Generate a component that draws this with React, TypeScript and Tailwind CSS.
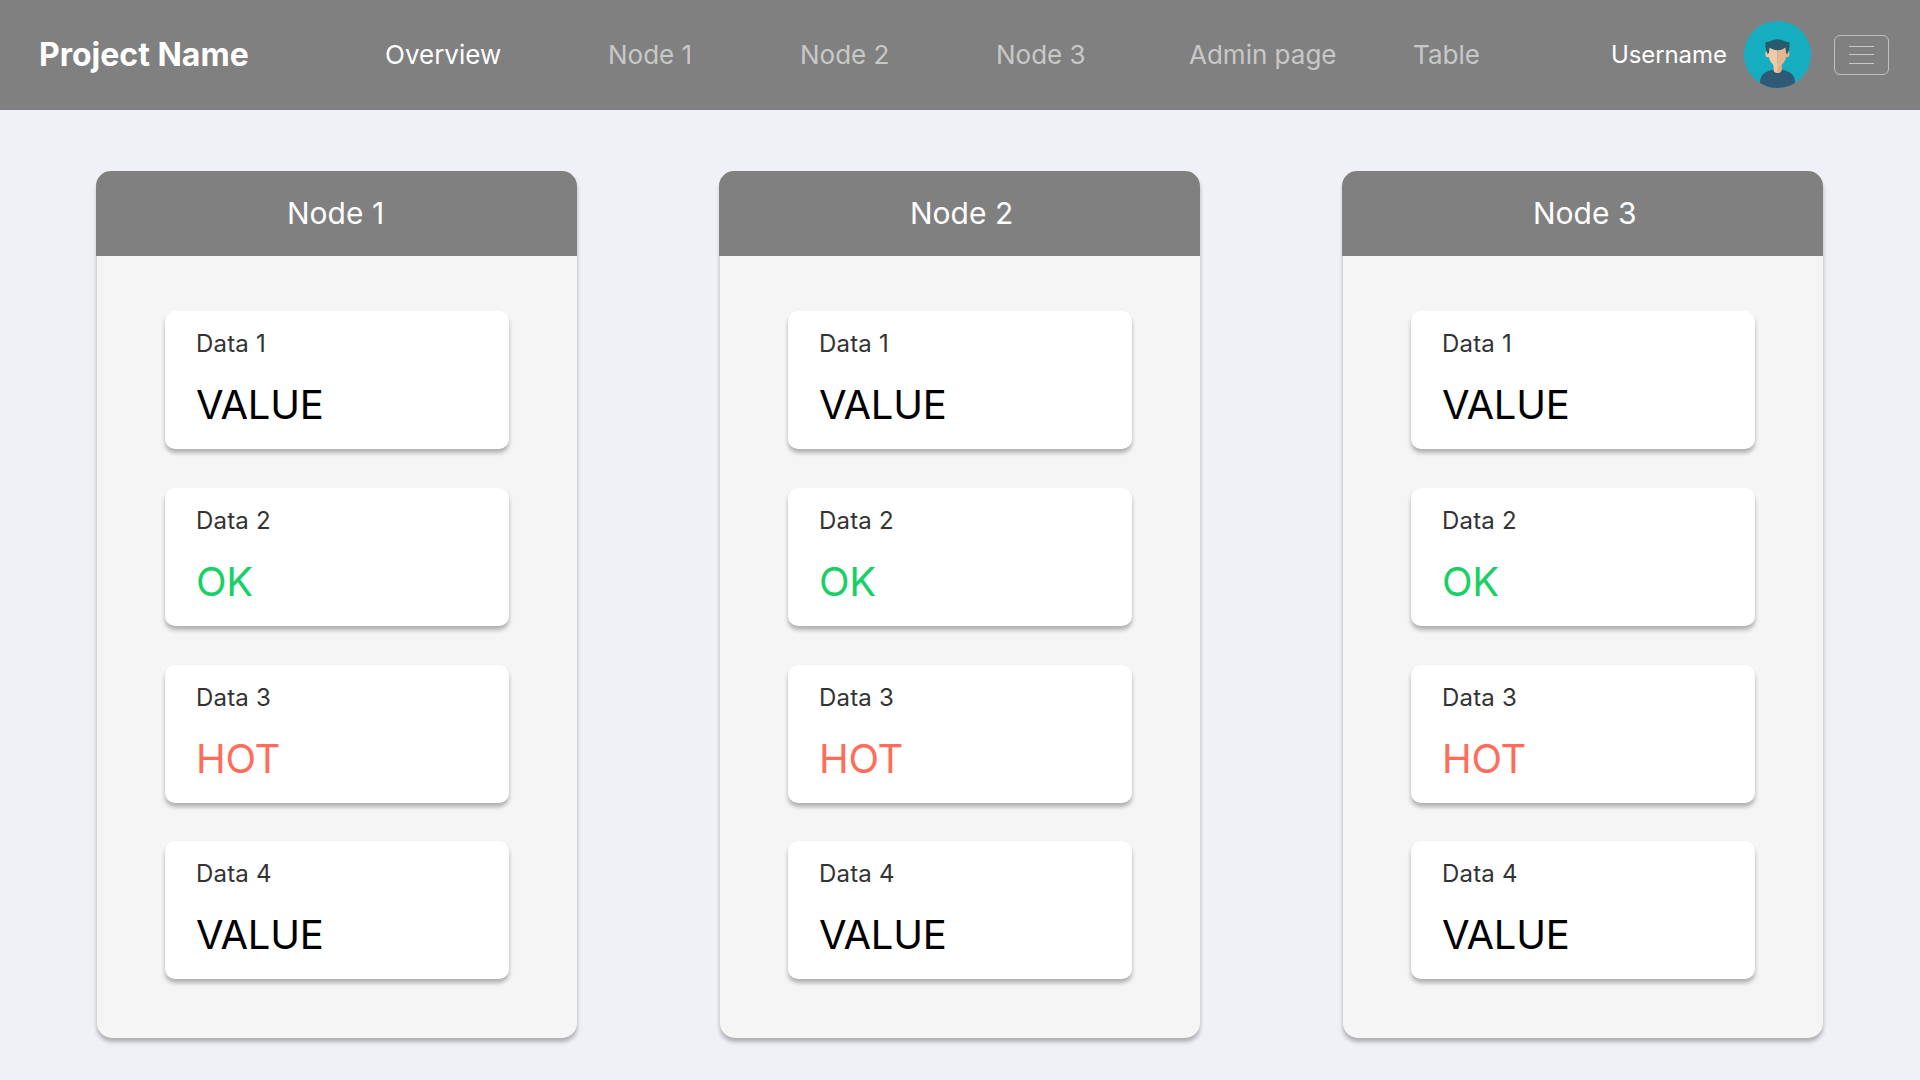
const navItems = [
  { label: "Overview", place: "ml-[137px] w-[223px] text-white" },
  { label: "Node 1", place: "w-[192px] text-[#c8c8c8]" },
  { label: "Node 2", place: "w-[196px] text-[#c8c8c8]" },
  { label: "Node 3", place: "w-[193px] text-[#c8c8c8]" },
  { label: "Admin page", place: "w-[224px] text-[#c8c8c8]" },
  { label: "Table", place: "w-[198px] text-[#c8c8c8]" },
];

const readings = [
  { label: "Data 1", value: "VALUE", tone: "text-black", gap: "mt-[55px]" },
  { label: "Data 2", value: "OK", tone: "text-[#18d065]", gap: "mt-[39px]" },
  { label: "Data 3", value: "HOT", tone: "text-[#ff6d5a]", gap: "mt-[39px]" },
  { label: "Data 4", value: "VALUE", tone: "text-black", gap: "mt-[38px]" },
];

function Avatar() {
  return (
    <svg className="mb-px ml-[17px] size-[67px] shrink-0" viewBox="0 0 67 67">
      <defs>
        <clipPath id="avatar">
          <circle cx="33.5" cy="33.5" r="33.5" />
        </clipPath>
      </defs>
      <g clipPath="url(#avatar)">
        <rect width="67" height="67" fill="#15aec1" />
        <path d="M16 67V61C16.500 53 21 50.500 29.500 48.500H37.500C46 50.500 50.500 53 51 61L52 67Z" fill="#2e5a75" />
        <path d="M29.500 42H37.500V49Q37 52 33.500 52Q30 52 29.500 49Z" fill="#efc4a0" />
        <path d="M33.500 42H37.500V49Q37 52 33.500 52Z" fill="#dfae8a" />
        <ellipse cx="23.700" cy="32.800" rx="2.300" ry="3.500" fill="#efc4a0" />
        <ellipse cx="43.300" cy="32.800" rx="2.300" ry="3.500" fill="#dfae8a" />
        <path d="M24.500 25H33.500V46C27.500 44.500 24.500 38 24.500 33Z" fill="#f3caa7" />
        <path d="M42.500 25H33.500V46C39.500 44.500 42.500 38 42.500 33Z" fill="#e6b691" />
        <path d="M21.500 21C26 21.500 28 18.500 33.500 18.300C39 18.500 41 21.500 45.500 21C46 26 45 29.500 43.500 33L42 32L41.500 26.500C37 30 30 30 25.500 26.500L25 32L23.500 33C22 29.500 21 26 21.500 21Z" fill="#275b6b" />
      </g>
    </svg>
  );
}

function NodeCard({ title }: { title: string }) {
  return (
    <section className="flex h-[867px] w-[481px] flex-col">
      <div className="flex h-full flex-col">
        <h2 className="z-10 flex h-[85px] shrink-0 items-center rounded-t-[15px] bg-[#808080] pb-px pl-[191px] text-[30px] leading-none text-white">
          {title}
        </h2>
        <div className="-mt-[85px] ml-px flex-1 rounded-[15px] bg-[#f5f5f5] px-[68px] pt-[85px] shadow-[0_4px_4px_rgba(0,0,0,0.28)]">
          {readings.map((r) => (
            <div
              key={r.label}
              className={`${r.gap} flex h-[138px] w-[344px] flex-col rounded-[10px] bg-white pl-[31px] shadow-[0_4px_4px_rgba(0,0,0,0.28)]`}
            >
              <div className="mt-[17px] text-[24px] leading-[32px] tracking-[0.2px] text-[#333]">{r.label}</div>
              <div className={`${r.tone} mt-[21px] text-[40px] leading-[48px] tracking-[-0.3px]`}>{r.value}</div>
            </div>
          ))}
        </div>
      </div>
    </section>
  );
}

export default function App() {
  return (
    <div className="h-[1080px] w-[1920px] overflow-hidden bg-[#f0f1f6] font-['Inter',sans-serif]">
      <header className="flex h-[110px] items-center bg-[#808080] pl-[39px] whitespace-nowrap">
        <h1 className="w-[209px] text-[32px] leading-none font-bold text-white">Project Name</h1>
        <nav className="flex text-[26px] leading-none">
          {navItems.map((n) => (
            <a key={n.label} className={n.place}>
              {n.label}
            </a>
          ))}
        </nav>
        <span className="w-[116px] text-[24px] leading-none tracking-[-0.1px] text-white">Username</span>
        <Avatar />
        <button className="ml-[23px] flex h-10 w-[55px] shrink-0 items-center justify-center rounded-[6px] border border-[#c0c0c0]">
          <svg width="25" height="20" viewBox="0 0 25 20" stroke="#c8c8c8">
            <path d="M0 1.500H25M0 9.500H25M0 18.500H25" />
          </svg>
        </button>
      </header>
      <main className="flex gap-[142px] pt-[61px] pl-[96px]">
        <NodeCard title="Node 1" />
        <NodeCard title="Node 2" />
        <NodeCard title="Node 3" />
      </main>
    </div>
  );
}
